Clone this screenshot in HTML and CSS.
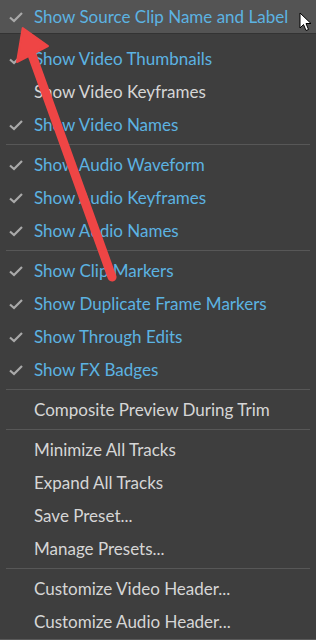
FILE: index.html
```html
<!DOCTYPE html>
<html lang="en">

<head>
    <meta charset="UTF-8">
    <meta name="viewport" content="width=device-width, initial-scale=1.0">
    <title>Timeline Display Settings</title>
    <link rel="stylesheet" href="styles.css">
</head>

<body>
    <div class="menu">
        <div class="item checked active"><span class="check"><svg viewBox="0 0 16 12"><path d="M2 6.5 L6 10 L14 2"/></svg></span><span class="label">Show Source Clip Name and Label</span></div>
        <div class="sep first"></div>
        <div class="item checked"><span class="check"><svg viewBox="0 0 16 12"><path d="M2 6.5 L6 10 L14 2"/></svg></span><span class="label">Show Video Thumbnails</span></div>
        <div class="item"><span class="check"></span><span class="label">Show Video Keyframes</span></div>
        <div class="item checked"><span class="check"><svg viewBox="0 0 16 12"><path d="M2 6.5 L6 10 L14 2"/></svg></span><span class="label">Show Video Names</span></div>
        <div class="sep"></div>
        <div class="item checked"><span class="check"><svg viewBox="0 0 16 12"><path d="M2 6.5 L6 10 L14 2"/></svg></span><span class="label">Show Audio Waveform</span></div>
        <div class="item checked"><span class="check"><svg viewBox="0 0 16 12"><path d="M2 6.5 L6 10 L14 2"/></svg></span><span class="label">Show Audio Keyframes</span></div>
        <div class="item checked"><span class="check"><svg viewBox="0 0 16 12"><path d="M2 6.5 L6 10 L14 2"/></svg></span><span class="label">Show Audio Names</span></div>
        <div class="sep"></div>
        <div class="item checked"><span class="check"><svg viewBox="0 0 16 12"><path d="M2 6.5 L6 10 L14 2"/></svg></span><span class="label">Show Clip Markers</span></div>
        <div class="item checked"><span class="check"><svg viewBox="0 0 16 12"><path d="M2 6.5 L6 10 L14 2"/></svg></span><span class="label">Show Duplicate Frame Markers</span></div>
        <div class="item checked"><span class="check"><svg viewBox="0 0 16 12"><path d="M2 6.5 L6 10 L14 2"/></svg></span><span class="label">Show Through Edits</span></div>
        <div class="item checked"><span class="check"><svg viewBox="0 0 16 12"><path d="M2 6.5 L6 10 L14 2"/></svg></span><span class="label">Show FX Badges</span></div>
        <div class="sep"></div>
        <div class="item"><span class="check"></span><span class="label">Composite Preview During Trim</span></div>
        <div class="sep"></div>
        <div class="item"><span class="check"></span><span class="label">Minimize All Tracks</span></div>
        <div class="item"><span class="check"></span><span class="label">Expand All Tracks</span></div>
        <div class="item"><span class="check"></span><span class="label">Save Preset...</span></div>
        <div class="item"><span class="check"></span><span class="label">Manage Presets...</span></div>
        <div class="sep"></div>
        <div class="item"><span class="check"></span><span class="label">Customize Video Header...</span></div>
        <div class="item"><span class="check"></span><span class="label">Customize Audio Header...</span></div>

        <!-- annotation arrow drawn over the menu -->
        <svg class="arrow" viewBox="0 0 316 640">
            <line x1="31" y1="52" x2="112" y2="277" />
            <polygon points="22.7,28 17,62 48,46" />
        </svg>

        <svg class="cursor" viewBox="0 0 13 20">
            <path d="M1 1 L1 16 L4.5 12.5 L7 18.5 L9.5 17.5 L7 11.5 L12 11.5 Z" />
        </svg>
    </div>
</body>

</html>
```

FILE: styles.css
```css
body {
    margin: 0;
    background-color: #3e3e3e;
    font-family: 'Lato', 'Open Sans', sans-serif;
}

.menu {
    position: relative;
    width: 316px;
    height: 640px;
    background-color: #3e3e3e;
    border-bottom: 1px solid #5a5a5a;
    box-sizing: border-box;
    overflow: hidden;
}

.item {
    display: flex;
    align-items: center;
    height: 33px;
    font-size: 17px;
    color: #d6d6d6;
}

.item.checked {
    color: #5cb3e2;
}

.item.active {
    background-color: #545454;
}

.check {
    width: 34px;
    display: flex;
    justify-content: center;
    box-sizing: border-box;
}

.check svg {
    width: 16px;
    height: 12px;
    margin-left: -3px;
}

.check path {
    fill: none;
    stroke: #a9a9a9;
    stroke-width: 2.2;
}

.sep {
    height: 7px;
    display: flex;
    align-items: center;
    padding: 0 6px;
}

.sep::after {
    content: '';
    flex: 1;
    height: 1px;
    background-color: #575757;
}

.sep.first {
    height: 9px;
    align-items: flex-start;
    padding: 0;
}

.sep.first::after {
    background-color: #333;
}

.arrow {
    position: absolute;
    left: 0;
    top: 0;
    width: 316px;
    height: 640px;
}

.arrow line {
    stroke: #ef4545;
    stroke-width: 9;
    stroke-linecap: round;
}

.arrow polygon {
    fill: #ef4545;
    stroke: #ef4545;
    stroke-width: 2;
    stroke-linejoin: round;
}

.cursor {
    position: absolute;
    left: 299px;
    top: 12px;
    width: 13px;
    height: 20px;
}

.cursor path {
    fill: #fff;
    stroke: #000;
    stroke-width: 1;
}
```
